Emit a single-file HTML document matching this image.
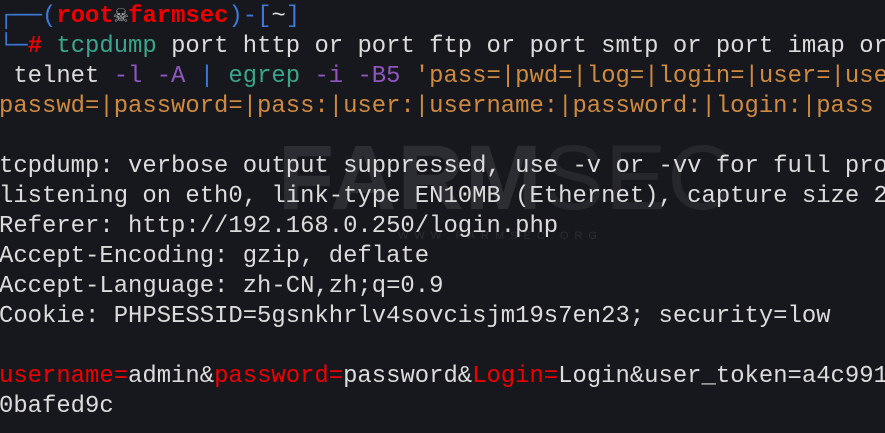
<!DOCTYPE html>
<html><head><meta charset="utf-8"><style>
html,body{margin:0;padding:0;background:#17181d;width:885px;height:433px;overflow:hidden}
pre{position:absolute;left:-1px;top:2px;margin:0;font-family:"Liberation Mono","DejaVu Sans Mono",monospace;font-size:23.9px;line-height:30px;color:#dcdcdc;white-space:pre}
.b{color:#3b78d8}.r{color:#ee0000;font-weight:bold}.rr{color:#ee0000}.t{color:#3aa58a}.p{color:#9055c0}.o{color:#d08a40}.g{color:#bbb}
.wm{position:absolute;left:278px;top:128px;font-family:"Liberation Sans",sans-serif;font-size:92px;line-height:100px;font-weight:bold;color:#2c2d33;letter-spacing:1px}
.wm span{font-weight:normal;color:#26272d}
.wm2{position:absolute;left:398px;top:230px;font-family:"Liberation Sans",sans-serif;font-size:11px;letter-spacing:6px;color:#2c2d33}
</style></head><body>
<div class="wm">FARM<span>SEC</span></div>
<div class="wm2">WWW.FARMSEC.ORG</div>
<pre><span class="b">┌──(</span><span class="r">root</span><span class="g">☠</span><span class="r">farmsec</span><span class="b">)-[</span>~<span class="b">]</span>
<span class="b">└─</span><span class="r">#</span> <span class="t">tcpdump</span> port http or port ftp or port smtp or port imap or
 telnet <span class="p">-l -A</span> <span class="b">|</span> <span class="t">egrep</span> <span class="p">-i -B5</span> <span class="o">'pass=|pwd=|log=|login=|user=|use</span>
<span class="o">passwd=|password=|pass:|user:|username:|password:|login:|pass </span>

tcpdump: verbose output suppressed, use -v or -vv for full pro
listening on eth0, link-type EN10MB (Ethernet), capture size 2
Referer: http://192.168.0.250/login.php
Accept-Encoding: gzip, deflate
Accept-Language: zh-CN,zh;q=0.9
Cookie: PHPSESSID=5gsnkhrlv4sovcisjm19s7en23; security=low

<span class="rr">username=</span>admin&amp;<span class="rr">password=</span>password&amp;<span class="rr">Login=</span>Login&amp;user_token=a4c991
0bafed9c</pre>
</body></html>
